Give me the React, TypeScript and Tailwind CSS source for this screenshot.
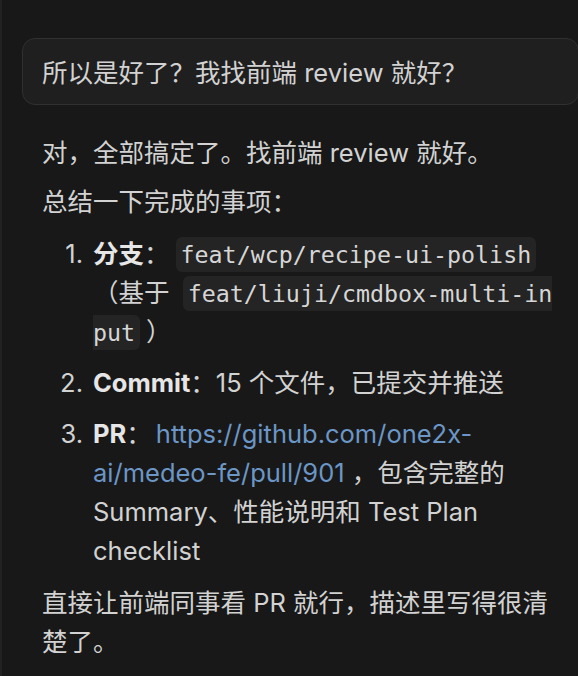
import React from 'react';

const sans = { fontFamily: 'Inter, "Noto Sans CJK SC", sans-serif' };

const Code: React.FC<{ children: React.ReactNode }> = ({ children }) => (
    <code className="font-['DejaVu_Sans_Mono',monospace] text-[23.3px] leading-none text-[#d6d6d6] bg-[#242424] rounded-[6px] px-[5px] py-[4px] mx-[6px] break-all">
        {children}
    </code>
);

const Item: React.FC<{ n: number; children: React.ReactNode }> = ({ n, children }) => (
    <li className="flex">
        <span className="w-[41px] shrink-0 text-right">{n}.</span>
        <div className="ml-[10px] min-w-0 flex-1">{children}</div>
    </li>
);

const App: React.FC = () => {
    return (
        <div className="min-h-screen bg-[#181818] border-l-2 border-[#222222] text-[#d2d2d2] text-[25.5px] leading-[39px]" style={sans}>
            <div className="pt-[38px] pl-[20px]">
                {/* user message */}
                <div className="border border-[#303030] bg-[#1f1f1f] rounded-[13px] pl-[19px] pt-[14px] pb-[12px] mr-[-1px]">
                    所以是好了？我找前端 review 就好？
                </div>

                {/* assistant reply */}
                <div className="px-[20px] pt-[28px] pb-[20px]">
                    <p>对，全部搞定了。找前端 review 就好。</p>
                    <p className="mt-[10px]">总结一下完成的事项：</p>

                    <ol className="mt-[13px] space-y-[12px]">
                        <Item n={1}>
                            <strong className="font-bold text-[#e6e6e6]">分支</strong>：<Code>feat/wcp/recipe-ui-polish</Code>（基于 <Code>feat/liuji/cmdbox-multi-input</Code>）
                        </Item>
                        <Item n={2}>
                            <strong className="font-bold text-[#e6e6e6]">Commit</strong>：15 个文件，已提交并推送
                        </Item>
                        <Item n={3}>
                            <strong className="font-bold text-[#e6e6e6]">PR</strong>：
                            <a className="ml-[4px] text-[#6b96c6]" href="#">https://github.com/one2x-ai/medeo-fe/pull/901</a> ，包含完整的 Summary、性能说明和 Test Plan checklist
                        </Item>
                    </ol>

                    <p className="mt-[13px]">直接让前端同事看 PR 就行，描述里写得很清楚了。</p>
                </div>
            </div>
        </div>
    );
};

export default App;
